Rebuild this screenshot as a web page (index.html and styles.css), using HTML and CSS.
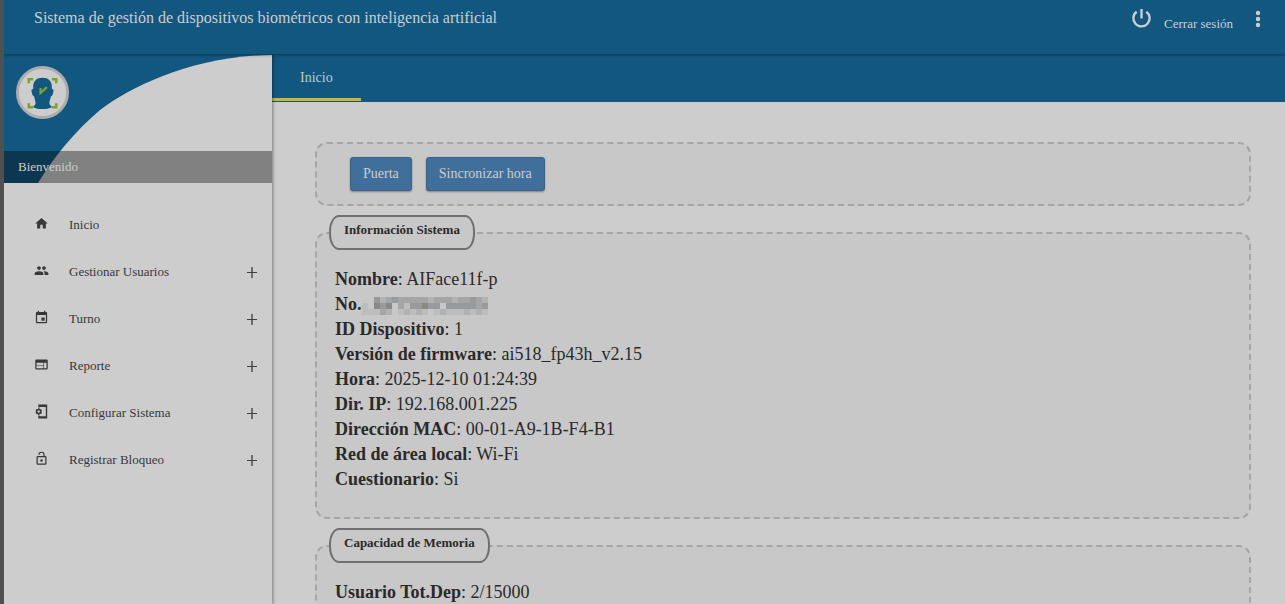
FILE: index.html
```html
<!DOCTYPE html>
<html lang="es">
<head>
<meta charset="utf-8">
<meta name="viewport" content="width=device-width, initial-scale=1">
<title>Sistema de gestión</title>
<link rel="stylesheet" href="styles.css">
</head>
<body>
<div class="app">
  <header class="topbar">
    <h1 class="title">Sistema de gestión de dispositivos biométricos con inteligencia artificial</h1>
    <div class="actions">
      <a class="logout" href="#salir">
        <svg class="power" viewBox="0 0 24 24" aria-hidden="true"><path d="M6.500 4.200A9.300 9.300 0 1 0 17.500 4.200M12 1v11" fill="none" stroke="currentColor" stroke-width="2.700"/></svg>
        <span class="logout-text">Cerrar sesión</span>
      </a>
      <button class="more" type="button" aria-label="Más opciones">
        <svg viewBox="0 0 6 18" aria-hidden="true"><circle cx="3" cy="3" r="2.2"/><circle cx="3" cy="9" r="2.2"/><circle cx="3" cy="15" r="2.2"/></svg>
      </button>
    </div>
  </header>
  <div class="body">
    <aside class="sidebar">
      <div class="profile">
        <svg class="profile-curve" viewBox="0 0 268 129" preserveAspectRatio="none" aria-hidden="true"><path d="M34 129C50 103 70 78 96 56C128 32 190 2 268 1V129Z"/></svg>
        <svg class="avatar" viewBox="0 0 54 54" role="img" aria-label="Logotipo">
          <circle cx="27" cy="27" r="25.5" fill="#cdcdcd" stroke="#adadad" stroke-width="3"/>
          <path d="M27 12c-6 0-9.500 3.500-9.500 9v2.500c-2 0-2 1.500-1.500 3 .5 2.500 1 4 2.500 4.500.5 3 1.500 5 1.500 7 0 2-2.500 2.500-2.500 4 5 2.500 14 2.500 19 0 0-1.500-2.500-2-2.500-4 0-2 1-4 1.500-7 1.500-.5 2-2 2.500-4.500.5-1.500.5-3-1.500-3V21c0-5.500-3.500-9-9.500-9z" fill="#125780"/>
          <path d="M13 17.500v-4h4.500M36.500 13.500H41v4M13 38v4h4.500M36.500 42H41v-4" fill="none" stroke="#80a030" stroke-width="2.600"/>
          <path d="M25 22.500v5l6.500-6" fill="none" stroke="#80a030" stroke-width="2.300"/>
        </svg>
        <p class="welcome">Bienvenido</p>
      </div>
      <nav class="menu">
        <a class="item" href="#inicio">
          <svg class="icon" viewBox="0 0 24 24" aria-hidden="true"><path d="M10 20v-6h4v6h5v-8h3L12 3 2 12h3v8z"/></svg>
          <span class="label">Inicio</span>
        </a>
        <a class="item" href="#usuarios">
          <svg class="icon" viewBox="0 0 24 24" aria-hidden="true"><path d="M16 11c1.660 0 2.990-1.340 2.990-3S17.660 5 16 5s-3 1.340-3 3 1.340 3 3 3zm-8 0c1.660 0 2.990-1.340 2.990-3S9.660 5 8 5 5 6.340 5 8s1.340 3 3 3zm0 2c-2.330 0-7 1.170-7 3.500V19h14v-2.500C15 14.170 10.330 13 8 13zm8 0c-.29 0-.62.02-.97.05 1.160.84 1.970 1.970 1.970 3.450V19h6v-2.500c0-2.330-4.670-3.500-7-3.500z"/></svg>
          <span class="label">Gestionar Usuarios</span><span class="plus"></span>
        </a>
        <a class="item" href="#turno">
          <svg class="icon" viewBox="0 0 24 24" aria-hidden="true"><path d="M17 12h-5v5h5v-5zM16 1v2H8V1H6v2H5a2 2 0 0 0-2 2v14a2 2 0 0 0 2 2h14a2 2 0 0 0 2-2V5a2 2 0 0 0-2-2h-1V1h-2zm3 18H5V8h14v11z"/></svg>
          <span class="label">Turno</span><span class="plus"></span>
        </a>
        <a class="item" href="#reporte">
          <svg class="icon" viewBox="0 0 24 24" aria-hidden="true"><path d="M20 4H4a2 2 0 0 0-2 2v12a2 2 0 0 0 2 2h16a2 2 0 0 0 2-2V6a2 2 0 0 0-2-2zm-5 14H4v-4h11v4zm0-5H4V9h11v4zm5 5h-4V9h4v9z"/></svg>
          <span class="label">Reporte</span><span class="plus"></span>
        </a>
        <a class="item" href="#configurar">
          <svg class="icon" viewBox="0 0 24 24" aria-hidden="true"><path d="M8 5.500V2h12v20H8v-3.500M8 3.500h12M8 20.500h12" fill="none" stroke="currentColor" stroke-width="2.200"/><circle cx="7.500" cy="12" r="3.300" fill="none" stroke="currentColor" stroke-width="2.600"/><path d="M7.500 6.800v2M7.500 15.200v2M3 9.400l2 1.100M10 13.500l2 1.100M3 14.600l2-1.100M10 10.500l2-1.100" stroke="currentColor" stroke-width="2.200"/></svg>
          <span class="label">Configurar Sistema</span><span class="plus"></span>
        </a>
        <a class="item" href="#bloqueo">
          <svg class="icon" viewBox="0 0 24 24" aria-hidden="true"><path d="M12 17a2 2 0 1 0 0-4 2 2 0 0 0 0 4zm6-9h-1V6A5 5 0 0 0 7 6h1.900a3.100 3.100 0 0 1 6.200 0v2H6a2 2 0 0 0-2 2v10a2 2 0 0 0 2 2h12a2 2 0 0 0 2-2V10a2 2 0 0 0-2-2zm0 12H6V10h12v10z"/></svg>
          <span class="label">Registrar Bloqueo</span><span class="plus"></span>
        </a>
      </nav>
    </aside>
    <div class="main">
      <nav class="tabs"><a class="tab" href="#inicio">Inicio</a></nav>
      <main class="content">
        <div class="panel toolbar">
          <button class="btn" type="button">Puerta</button>
          <button class="btn" type="button">Sincronizar hora</button>
        </div>
        <fieldset class="panel group">
          <legend class="legend">Información Sistema</legend>
          <p class="row"><b>Nombre</b>: AIFace11f-p</p>
          <p class="row"><b>No.</b><svg class="mosaic" viewBox="0 0 21 3" preserveAspectRatio="none" shape-rendering="crispEdges" role="img" aria-label="Número oculto">
            <path fill="#bdbdbd" d="M0 1h1v2H0zM1 2h3v1H1zM6 2h1v1H6zM8 2h1v1H8zM10 2h1v1h-1zM12 2h1v1h-1zM14 2h3v1h-3zM18 2h1v1h-1zM20 2h1v1h-1zM7 1h1v1H7z"/>
            <path fill="#b2b2b2" d="M3 0h1v1H3zM4 2h1v1H4zM7 2h1v1H7zM11 0h1v1h-1zM13 2h1v1h-1zM15 0h1v1h-1zM17 2h1v1h-1zM19 2h1v1h-1zM20 0h1v1h-1zM9 2h1v1H9z"/>
            <path fill="#a5a5a5" d="M4 0h1v1H4zM6 0h1v2H6zM7 0h4v1H7zM12 0h3v1h-3zM16 0h2v1h-2zM19 0h1v1h-1zM19 1h1v1h-1zM3 2h1v1H3z"/>
            <path fill="#989a9c" d="M2 0h1v1H2zM5 0h1v1H5zM3 1h1v1H3zM8 1h2v1H8zM11 1h2v1h-2zM14 1h5v1h-5zM18 0h1v1h-1zM20 1h1v1h-1z"/>
            <path fill="#8b8986" d="M2 1h1v1H2zM4 1h1v1H4zM10 1h1v1h-1z"/>
          </svg></p>
          <p class="row"><b>ID Dispositivo</b>: 1</p>
          <p class="row"><b>Versión de firmware</b>: ai518_fp43h_v2.15</p>
          <p class="row"><b>Hora</b>: 2025-12-10 01:24:39</p>
          <p class="row"><b>Dir. IP</b>: 192.168.001.225</p>
          <p class="row"><b>Dirección MAC</b>: 00-01-A9-1B-F4-B1</p>
          <p class="row"><b>Red de área local</b>: Wi-Fi</p>
          <p class="row"><b>Cuestionario</b>: Si</p>
        </fieldset>
        <fieldset class="panel group">
          <legend class="legend">Capacidad de Memoria</legend>
          <p class="row"><b>Usuario Tot.Dep</b>: 2/15000</p>
        </fieldset>
      </main>
    </div>
  </div>
</div>
</body>
</html>
```

FILE: styles.css
```css
* {
  box-sizing: border-box;
}

body {
  margin: 0;
  background: #cdcdcd;
  color: #2a2a2a;
  font-family: "Liberation Serif", "Times New Roman", serif;
  font-size: 13px;
}

a {
  color: inherit;
  text-decoration: none;
}

button {
  font: inherit;
  cursor: pointer;
}

.app {
  display: flex;
  flex-direction: column;
  height: 100vh;
  overflow: hidden;
  border-left: 4px solid #505050;
}

.topbar {
  position: relative;
  z-index: 2;
  display: flex;
  flex: none;
  justify-content: space-between;
  height: 54px;
  padding: 8px 24px 0 30px;
  background: #125780;
  color: #cdcdcd;
  box-shadow: 0 1px 3px rgba(0, 0, 0, 0.4);
}

.title {
  margin: 0;
  font-size: 16px;
  font-weight: normal;
  line-height: 20px;
}

.actions {
  display: flex;
  align-items: flex-start;
  gap: 22px;
}

.logout {
  display: flex;
  gap: 12px;
}

.power {
  width: 21px;
  height: 21px;
}

.logout-text {
  padding-top: 8px;
  line-height: 16px;
}

.more {
  padding: 2px 0 0;
  border: 0;
  background: none;
  color: inherit;
}

.more svg {
  display: block;
  width: 6px;
  height: 18px;
  fill: currentColor;
}

.body {
  display: flex;
  flex: 1;
  min-height: 0;
}

.sidebar {
  position: relative;
  z-index: 1;
  flex: none;
  width: 268px;
  background: #cdcdcd;
  box-shadow: 1px 0 3px rgba(0, 0, 0, 0.4);
}

.profile {
  position: relative;
  display: flex;
  flex-direction: column;
  justify-content: space-between;
  height: 129px;
  padding-top: 12px;
  background: #125780;
}

.profile-curve {
  position: absolute;
  inset: 0;
  width: 100%;
  height: 100%;
  fill: #cdcdcd;
}

.avatar {
  position: relative;
  width: 53px;
  height: 53px;
  margin-left: 12px;
}

.welcome {
  position: relative;
  margin: 0;
  padding: 0 14px;
  background: rgba(0, 0, 0, 0.37);
  color: #cdcdcd;
  line-height: 32px;
}

.menu {
  padding-top: 18px;
}

.item {
  display: flex;
  align-items: center;
  height: 47px;
  padding: 0 15px 0 30px;
  color: #383838;
}

.icon {
  width: 15px;
  height: 15px;
  margin-bottom: 2px;
  fill: currentColor;
}

.label {
  flex: 1;
  padding-left: 20px;
}

.plus {
  width: 10px;
  height: 12px;
  margin-top: 2px;
  background:
    linear-gradient(#404040, #404040) center / 10px 1px no-repeat,
    linear-gradient(#6c6c6c, #6c6c6c) center / 2px 11px no-repeat;
}

.main {
  display: flex;
  flex: 1;
  flex-direction: column;
  min-width: 0;
}

.tabs {
  display: flex;
  flex: none;
  height: 48px;
  background: #125780;
}

.tab {
  padding: 0 28px;
  border-bottom: 3px solid #c9b838;
  margin-bottom: 1px;
  color: #bccbd4;
  font-size: 14px;
  line-height: 48px;
}

.content {
  flex: 1;
  min-height: 0;
  padding: 40px 34px 0 43px;
  overflow: hidden;
}

.panel {
  border: 2px dashed #a6a6a6;
  border-radius: 12px;
  background: #c8c8c8;
}

.toolbar {
  display: flex;
  gap: 14px;
  padding: 13px 33px;
}

.btn {
  height: 34px;
  padding: 0 12px;
  border: 1px solid #386389;
  border-radius: 3px;
  background: #416f9b;
  box-shadow: 0 1px 2px rgba(0, 0, 0, 0.35);
  color: #cdcdcd;
  font-size: 14px;
}

.group {
  min-width: 0;
  margin: 9px 0 0;
  padding: 17px 18px 25px;
}

.legend {
  height: 35px;
  margin-left: -6px;
  padding: 0 13px;
  border: 2px solid #707070;
  border-radius: 10px / 16px;
  background: #c8c8c8;
  font-weight: bold;
  line-height: 26px;
}

.row {
  margin: 0;
  font-size: 18px;
  line-height: 25px;
}

.mosaic {
  width: 126px;
  height: 18px;
  vertical-align: -5px;
}
```
